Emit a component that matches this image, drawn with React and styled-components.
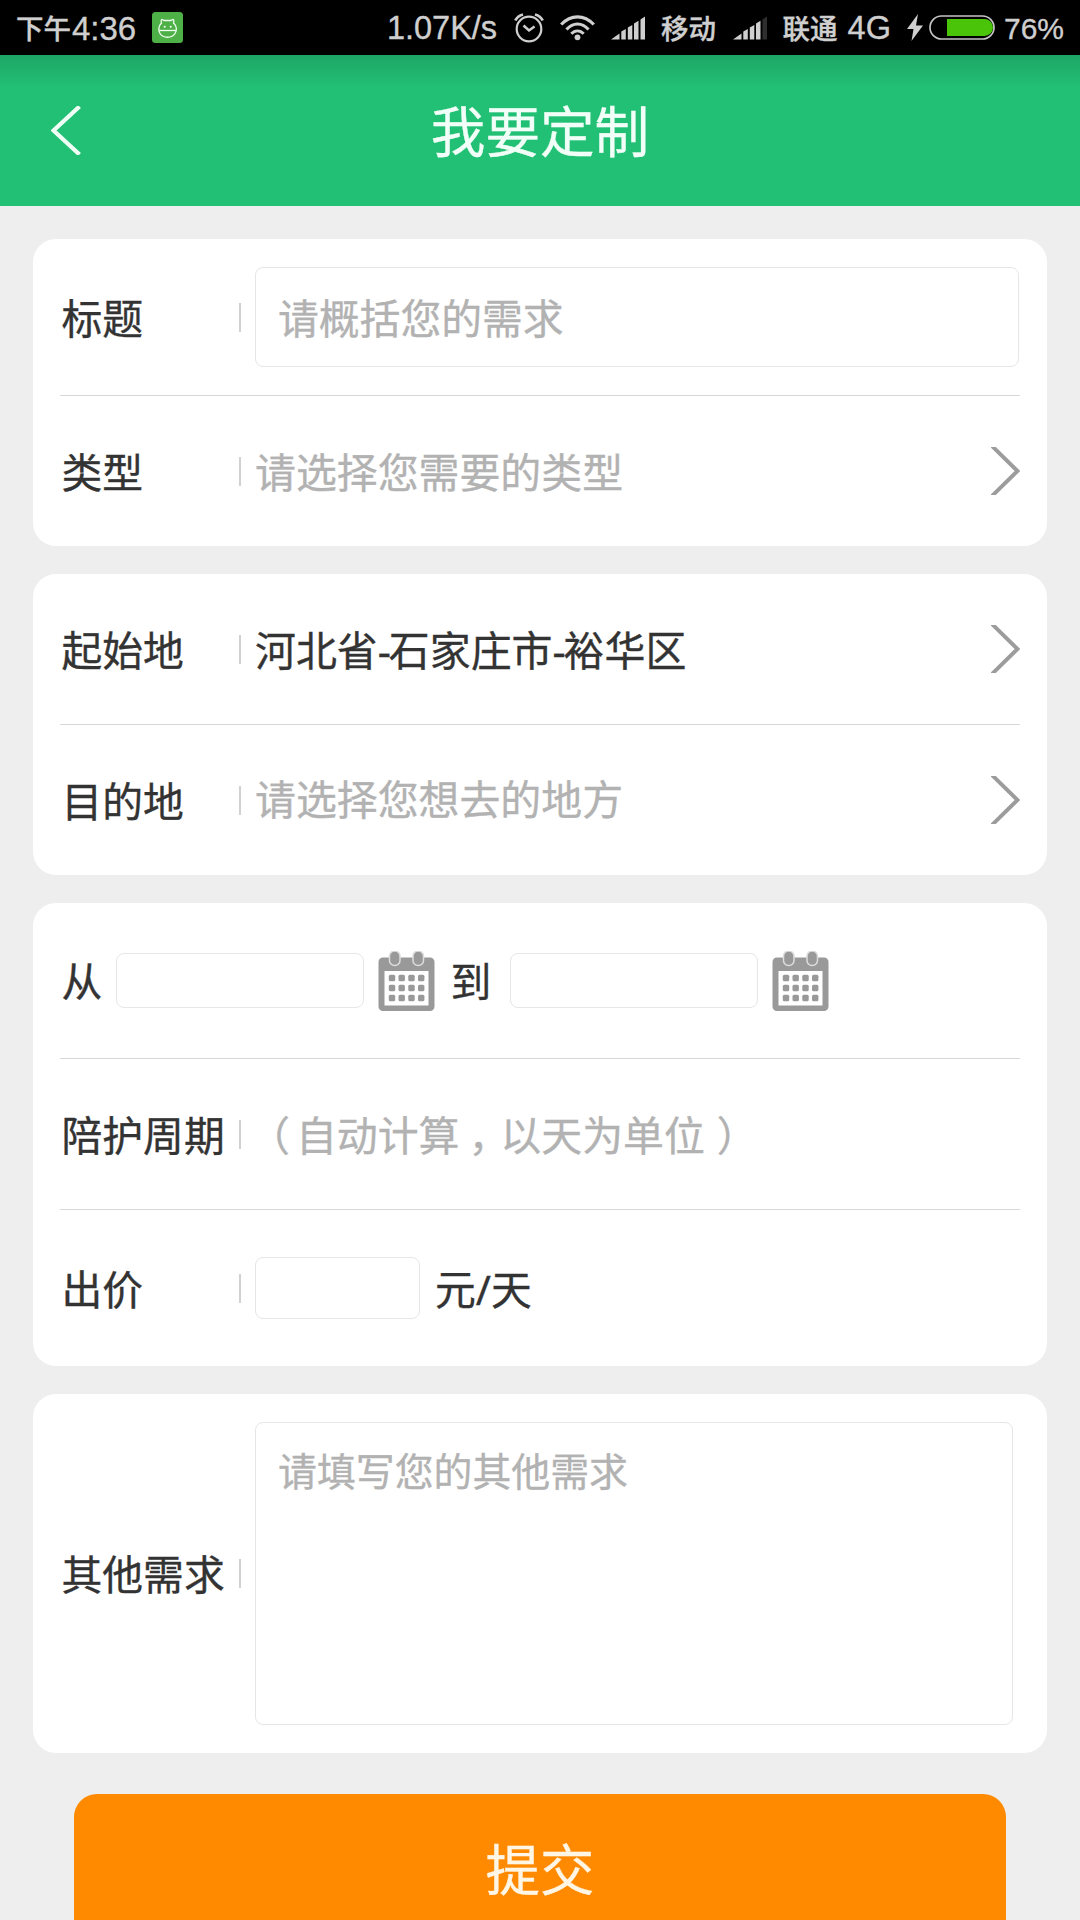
import React from 'react';
import styled, { createGlobalStyle } from 'styled-components';

const GlobalStyle = createGlobalStyle`
	* {
		box-sizing: border-box;
	}

	body {
		margin: 0;
		background: #eeeeee;
		font-family: 'Noto Sans', 'Noto Sans CJK SC', sans-serif;
		color: #333333;
	}
`;

const Screen = styled.div`
	display: flex;
	flex-direction: column;
	width: 1080px;
	height: 1920px;
	overflow: hidden;
	background: #eeeeee;
	-webkit-text-stroke: 0.35px currentColor;
`;

const StatusBar = styled.div`
	display: flex;
	flex: none;
	align-items: center;
	justify-content: space-between;
	height: 55px;
	padding: 0 16px;
	background: #000;
	color: #cfcfcf;
`;

const StatusGroup = styled.div`
	display: flex;
	align-items: center;
	height: 55px;

	svg {
		flex: none;
		display: block;
	}
`;

const StatusText = styled.span`
	font-family: 'Liberation Sans', sans-serif;
	font-size: ${(props) => props.$size || 32.5}px;
	line-height: 55px;
	height: 55px;
	white-space: nowrap;
	padding-top: 1px;
	margin-left: ${(props) => props.$gap || 0}px;
`;

const StatusHan = styled.span`
	font-family: 'Noto Sans CJK SC', sans-serif;
	font-size: 27.5px;
	font-weight: 500;
	line-height: 55px;
	height: 55px;
	white-space: nowrap;
	margin-left: ${(props) => props.$gap || 0}px;
`;

const Icon = styled.svg`
	margin-left: ${(props) => props.$gap || 0}px;
`;

const Header = styled.header`
	display: grid;
	grid-template-columns: 120px 1fr 120px;
	align-items: center;
	flex: none;
	height: 151px;
	background: linear-gradient(rgba(0, 0, 0, 0.14), rgba(0, 0, 0, 0) 32px), #22c075;
`;

const BackButton = styled.button`
	display: flex;
	padding: 0 0 0 51px;
	border: 0;
	background: none;
`;

const Title = styled.h1`
	margin: 0;
	padding-top: 1px;
	font-size: 54.6px;
	font-weight: 400;
	line-height: 80px;
	text-align: center;
	color: #f2fff8;
`;

const Form = styled.form`
	display: flex;
	flex-direction: column;
	gap: 28px;
	padding: 33px 33px 0;
`;

const Card = styled.section`
	padding: 0 27px;
	border-radius: 23px;
	background: #fff;
`;

const Row = styled.div`
	display: flex;
	align-items: center;
	height: ${(props) => props.$height || 150}px;

	& + & {
		border-top: 1px solid #d8d8d8;
	}
`;

const Label = styled.label`
	flex: none;
	width: ${(props) => props.$width || 179}px;
	padding: 1px 0 0 1.5px;
	font-size: 40.8px;
	line-height: 60px;
	white-space: nowrap;
`;

const Bar = styled.i`
	flex: none;
	width: 2px;
	height: 29px;
	margin-right: 14px;
	background: #d2d2d2;
`;

const Value = styled.span`
	flex: 1;
	padding-top: ${(props) => (props.$raised ? 0 : 1)}px;
	padding-bottom: ${(props) => (props.$raised ? 3 : 0)}px;
	font-size: 40.9px;
	line-height: 60px;
	white-space: nowrap;
	color: ${(props) => (props.$empty ? '#b2b2b2' : '#333333')};
`;

const Dash = styled.span`
	letter-spacing: -2px;
`;

/* half-width punctuation centred in a full-width cell */
const Mark = styled.span`
	display: inline-block;
	width: 1em;
	padding-left: ${(props) => props.$inset}px;
	font-feature-settings: 'halt' 1;
`;

const Input = styled.input`
	flex: none;
	width: ${(props) => props.$width}px;
	height: ${(props) => props.$height}px;
	margin: 0;
	padding: 1px 22px 0;
	border: 1px solid #e6e6e6;
	border-radius: 8px;
	outline: none;
	background: #fff;
	font-family: inherit;
	font-size: 40.8px;
	color: #333333;

	&::placeholder {
		color: #b2b2b2;
		opacity: 1;
	}
`;

const TextArea = styled.textarea`
	width: 758px;
	height: 303px;
	margin: 0;
	padding: 18px 22px;
	border: 1px solid #e6e6e6;
	border-radius: 8px;
	outline: none;
	resize: none;
	background: #fff;
	font-family: inherit;
	font-size: 38.9px;
	line-height: 60px;

	&::placeholder {
		color: #b2b2b2;
		opacity: 1;
	}
`;

const CalendarButton = styled.button`
	display: flex;
	flex: none;
	margin: 0 ${(props) => (props.$last ? 0 : 14)}px 0 14px;
	padding: 0;
	border: 0;
	background: none;
`;

const Unit = styled.span`
	margin-left: 15px;
	padding-top: 1px;
	font-size: 40.8px;
	line-height: 60px;
`;

const Submit = styled.button`
	height: 150px;
	margin: 13px 41px 0;
	padding: 0 0 5px;
	border: 0;
	border-radius: 23px;
	background: #ff8a00;
	font-family: inherit;
	font-size: 54.4px;
	color: #fff6e6;
`;

const MascotIcon = () => (
	<Icon $gap={15.5} width="31" height="31" viewBox="0 0 31 31">
		<rect width="31" height="31" rx="3.5" fill="#4eb148" />
		<g fill="none" stroke="#f0fff0" strokeWidth="1.3">
			<path d="M9.500 11C8.500 8 9.500 6.300 12 8.500h7C21.500 6.300 22.500 8 21.500 11C25 14 25 18.500 23 21.500c-3 5-12 5-15 0C6 18.500 6.500 14 9.500 11z" />
			<path d="M7.200 18.500h17" />
		</g>
		<circle cx="12.700" cy="14.700" r="1" fill="#fff" />
		<circle cx="18.700" cy="14.700" r="1" fill="#fff" />
	</Icon>
);

const AlarmIcon = () => (
	<Icon $gap={17} width="30" height="30" viewBox="0 0 30 30" fill="none" stroke="#cfcfcf" strokeWidth="2.2">
		<circle cx="15" cy="16" r="12.300" />
		<path d="M9.500 12.500l5.500 5 5.500-4" strokeWidth="2.500" />
		<path d="M1.300 7.500Q3.500 3 9 1.500M28.700 7.500Q26.500 3 21 1.500" strokeWidth="2.800" />
	</Icon>
);

const WifiIcon = () => (
	<Icon $gap={16} width="35" height="27" viewBox="0 0 35 27" fill="none" stroke="#cfcfcf" strokeWidth="3.2">
		<path d="M1.200 10.500Q8.500 2.800 17.500 2.800T33.800 10.500" />
		<path d="M6.500 15.500Q11.500 10 17.500 10T28.500 15.500" />
		<path d="M11.300 19.800Q14 16.800 17.500 16.800T23.700 19.800" strokeWidth="2.800" />
		<circle cx="17.500" cy="23.300" r="2.900" fill="#cfcfcf" stroke="none" />
	</Icon>
);

const SignalIcon = ({ gap, weak }) => (
	<Icon $gap={gap} width="34" height="24" viewBox="0 0 34 24" fill="#cfcfcf">
		<path d="M0 23.500L8.500 17.500V23.500z" />
		<path d="M10.300 15.500l4.500-2.500v10.500h-4.500z" />
		<path d="M16.800 11.500l4.500-2.500v14.500h-4.500z" />
		<path d="M23 7.500l4.500-2.800v18.800h-4.500z" />
		<path d="M29.500 3.500l4.500-3v23h-4.500z" fill={weak ? '#2e2e2e' : '#cfcfcf'} />
	</Icon>
);

const BoltIcon = () => (
	<Icon $gap={16} width="16" height="27" viewBox="0 0 16 27">
		<path d="M11 0L0 15h6.500L4.500 27 16 11.500H9z" fill="#cfcfcf" />
	</Icon>
);

const BatteryIcon = () => (
	<Icon $gap={6} width="66" height="25" viewBox="0 0 66 25">
		<rect x="1" y="1" width="64" height="23" rx="11.500" fill="none" stroke="#c4c4c4" strokeWidth="1.700" />
		<path d="M18 4h37.500a8.500 8.500 0 0 1 0 17H18z" fill="#4ac408" />
	</Icon>
);

const BackIcon = () => (
	<svg width="30" height="49" viewBox="0 0 30 49">
		<path d="M28.500 0.500L2.500 24.500 28.500 48.500" fill="none" stroke="#effff6" strokeWidth="4.200" />
	</svg>
);

const ChevronIcon = () => (
	<svg width="29" height="48" viewBox="0 0 29 48">
		<path d="M0 -2L26.500 24 0 50" fill="none" stroke="#9c9c9c" strokeWidth="3.900" />
	</svg>
);

const CalendarIcon = () => (
	<svg width="57" height="60" viewBox="0 0 57 60">
		<rect x="0.500" y="6.500" width="56" height="53.500" rx="4.500" fill="#999999" />
		<rect x="6.500" y="20" width="44" height="34.500" fill="#fff" />
		{[16.5, 40].map((x) => (
			<rect key={x} x={x - 5} y="0" width="10.500" height="14.500" rx="5" fill="#999999" stroke="#dddddd" strokeWidth="1.500" />
		))}
		{[27, 37, 47].map((y) =>
			[14, 23.7, 33.5, 43.2].map((x) => (
				<rect key={`${x}-${y}`} x={x - 3.2} y={y - 3.2} width="6.400" height="6.400" rx="1.500" fill="#999999" />
			))
		)}
	</svg>
);

const App = () => {
	return (
		<Screen>
			<GlobalStyle />
			<StatusBar>
				<StatusGroup>
					<StatusHan>下午</StatusHan>
					<StatusText $gap={1} $size={33}>
						4:36
					</StatusText>
					<MascotIcon />
				</StatusGroup>
				<StatusGroup>
					<StatusText>1.07K/s</StatusText>
					<AlarmIcon />
					<WifiIcon />
					<SignalIcon gap={16} />
					<StatusHan $gap={16}>移动</StatusHan>
					<SignalIcon gap={17} weak />
					<StatusHan $gap={15.5}>联通</StatusHan>
					<StatusText $gap={10}>4G</StatusText>
					<BoltIcon />
					<BatteryIcon />
					<StatusText $gap={9} $size={30}>
						76%
					</StatusText>
				</StatusGroup>
			</StatusBar>

			<Header>
				<BackButton type="button">
					<BackIcon />
				</BackButton>
				<Title>我要定制</Title>
			</Header>

			<Form>
				<Card>
					<Row $height={156}>
						<Label>标题</Label>
						<Bar />
						<Input $width={764} $height={100} placeholder="请概括您的需求" />
					</Row>
					<Row $height={151}>
						<Label>类型</Label>
						<Bar />
						<Value $empty>请选择您需要的类型</Value>
						<ChevronIcon />
					</Row>
				</Card>

				<Card>
					<Row>
						<Label>起始地</Label>
						<Bar />
						<Value>
							河北省<Dash>-</Dash>石家庄市<Dash>-</Dash>裕华区
						</Value>
						<ChevronIcon />
					</Row>
					<Row $height={151}>
						<Label>目的地</Label>
						<Bar />
						<Value $empty $raised>
							请选择您想去的地方
						</Value>
						<ChevronIcon />
					</Row>
				</Card>

				<Card>
					<Row $height={155}>
						<Label $width={56}>从</Label>
						<Input $width={248} $height={55} />
						<CalendarButton type="button">
							<CalendarIcon />
						</CalendarButton>
						<Label $width={61}>到</Label>
						<Input $width={248} $height={55} />
						<CalendarButton type="button" $last>
							<CalendarIcon />
						</CalendarButton>
					</Row>
					<Row $height={151}>
						<Label>陪护周期</Label>
						<Bar />
						<Value $empty>
							<Mark $inset={14.4}>（</Mark>自动计算<Mark $inset={9}>，</Mark>以天为单位<Mark $inset={12}>）</Mark>
						</Value>
					</Row>
					<Row $height={157}>
						<Label>出价</Label>
						<Bar />
						<Input $width={165} $height={62} />
						<Unit>元/天</Unit>
					</Row>
				</Card>

				<Card>
					<Row $height={359}>
						<Label>其他需求</Label>
						<Bar />
						<TextArea placeholder="请填写您的其他需求" />
					</Row>
				</Card>

				<Submit type="button">提交</Submit>
			</Form>
		</Screen>
	);
};

export default App;
